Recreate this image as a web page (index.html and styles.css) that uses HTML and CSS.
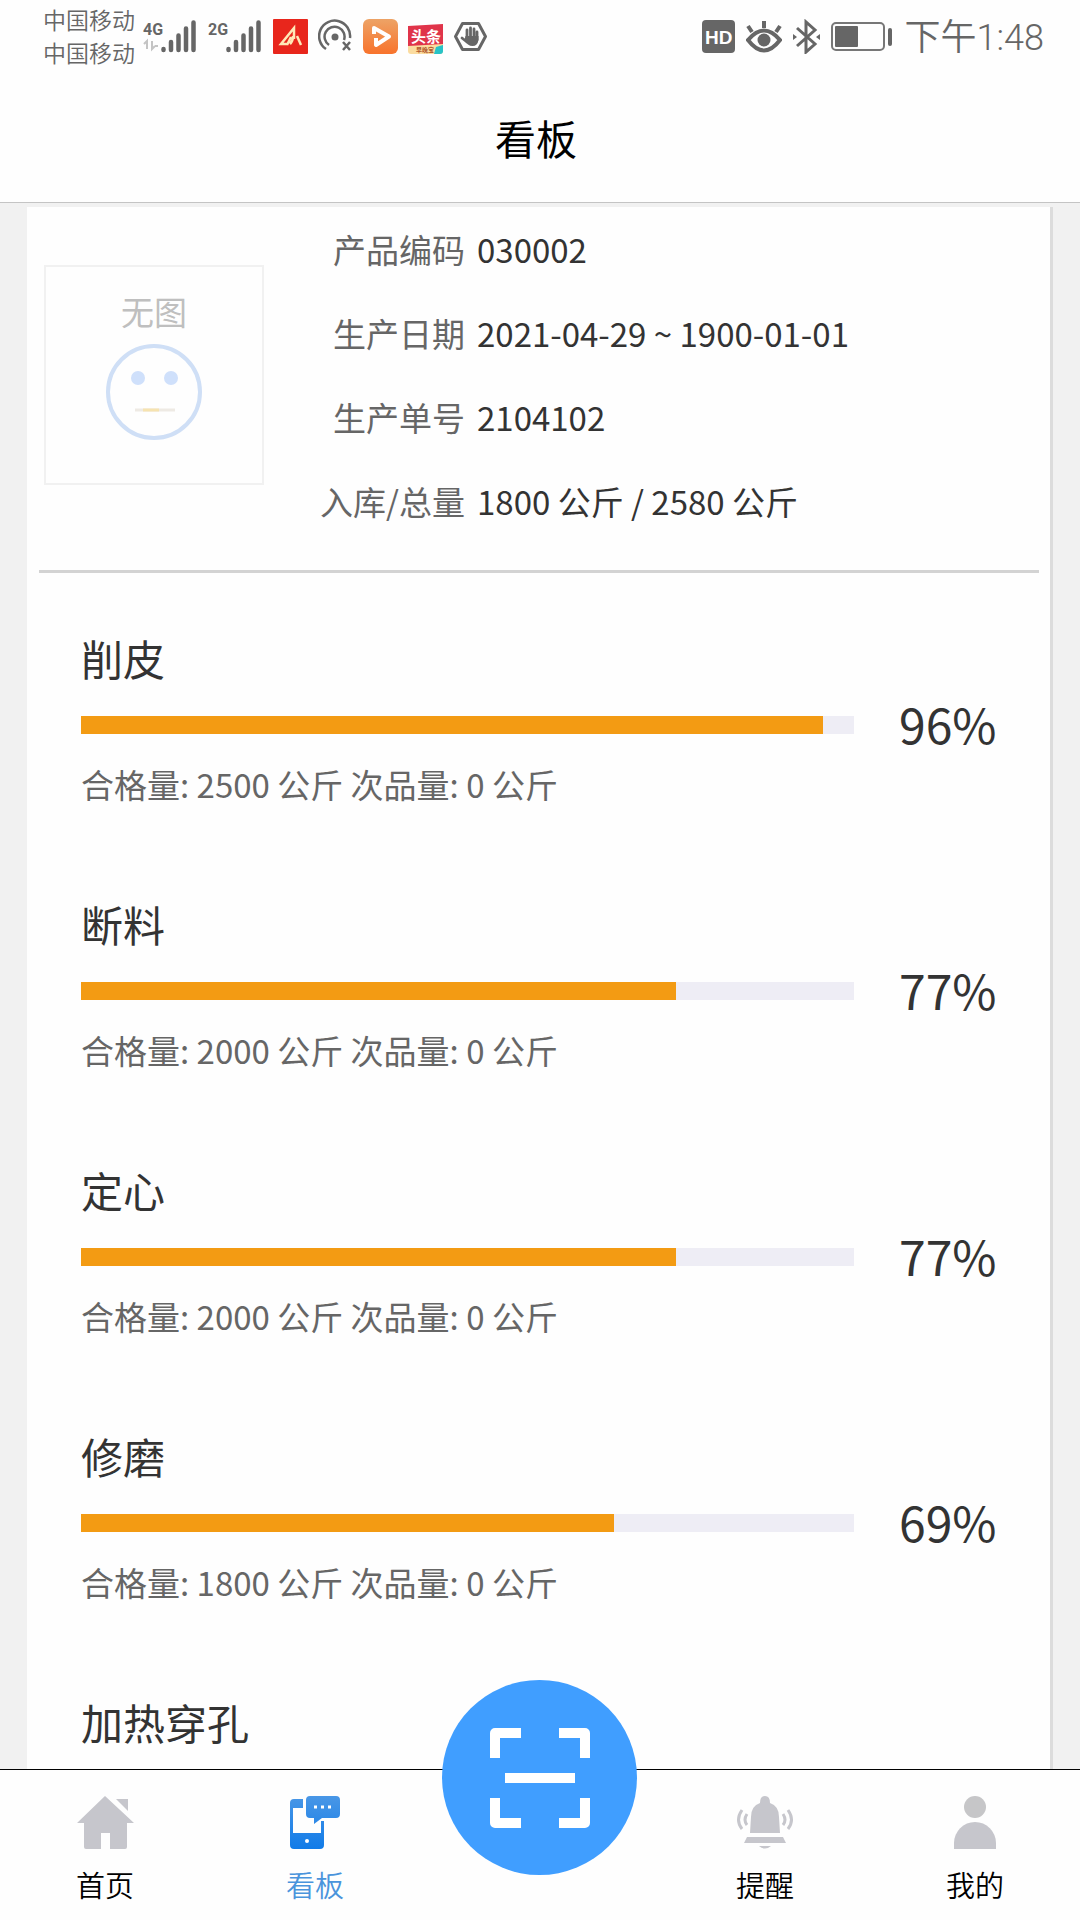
FILE: index.html
```html
<!DOCTYPE html>
<html lang="zh-CN">
<head>
  <meta charset="UTF-8" />
  <meta name="viewport" content="width=device-width, initial-scale=1.0" />
  <title>看板</title>
  <link rel="stylesheet" href="styles.css">
</head>
<body>
  <div class="statusbar">
    <div class="carriers">
      <span>中国移动</span>
      <span>中国移动</span>
    </div>
    <svg class="signal" width="54" height="36" viewBox="0 0 54 36">
      <text class="net" x="0" y="17">4G</text>
      <path d="M4 31V23L1 26M9 23v8l3-3M12 28h3" fill="none" stroke="#c4c4c4" stroke-width="2"/>
      <path d="M20.500 31v1M28 24v8M35.500 17.500v14.500M43 10.500v21.500M50.500 4.500v27.500" stroke="#666" stroke-width="4.500" stroke-linecap="round"/>
    </svg>
    <svg class="signal" width="54" height="36" viewBox="0 0 54 36">
      <text class="net" x="0" y="17">2G</text>
      <path d="M20.500 31v1M28 24v8M35.500 17.500v14.500M43 10.500v21.500M50.500 4.500v27.500" stroke="#666" stroke-width="4.500" stroke-linecap="round"/>
    </svg>
    <div class="notices">
      <svg width="35" height="35" viewBox="0 0 35 35">
        <rect width="35" height="35" rx="1" fill="#e8261c"/>
        <path d="M14 25H8L21 9v11M14 26l4-8M24 17l4 9M20 17q0 5-3 8" fill="none" stroke="#ffe9b8" stroke-width="2.500"/>
      </svg>
      <svg width="35" height="35" viewBox="0 0 35 35">
        <circle cx="17" cy="18" r="3.500" fill="#666"/>
        <path d="M11 26a10 10 0 1 1 15-5M8 30a15.500 15.500 0 1 1 24-11M25 23l7 8M32 23l-7 8" fill="none" stroke="#666" stroke-width="2.500"/>
      </svg>
      <svg width="35" height="35" viewBox="0 0 35 35">
        <defs>
          <linearGradient id="orange" x1="0" y1="0" x2="0" y2="1">
            <stop offset="0" stop-color="#eda366"/>
            <stop offset="1" stop-color="#f8732c"/>
          </linearGradient>
        </defs>
        <rect width="35" height="35" rx="6" fill="url(#orange)"/>
        <path d="M11 15V9l15 8.500L13 26v-7" fill="none" stroke="#fff" stroke-width="4" stroke-linejoin="round"/>
      </svg>
      <svg width="35" height="35" viewBox="0 0 35 35">
        <path d="M0 7l35-2v22H0z" fill="#e0344a"/>
        <path d="M0 27l35-2v7q0 3-3 3H3q-3 0-3-3z" fill="#fbdca0"/>
        <path d="M28 28l7-2v6q0 3-3 3h-6z" fill="#27c3c7"/>
        <text class="toutiao" x="3" y="23">头条</text>
        <text class="toutiao-sub" x="8" y="33">早晚宝</text>
      </svg>
      <svg width="35" height="35" viewBox="0 0 35 35">
        <path d="M9.500 4.500h16l7 13-7 13h-16l-7-13z" fill="none" stroke="#666" stroke-width="3" stroke-linejoin="round"/>
        <path d="M9 19l5 4M14 11v9M17.500 9v10M21 10v10M24 13v8" stroke="#666" stroke-width="2.800" stroke-linecap="round"/>
        <path d="M12.500 17h13v4q-1 6-6 6t-8-6z" fill="#666"/>
      </svg>
    </div>
    <div class="system">
      <svg width="33" height="35" viewBox="0 0 33 35">
        <rect y="1" width="33" height="33" rx="4" fill="#666"/>
        <text class="hd" x="3" y="25">HD</text>
      </svg>
      <svg width="36" height="35" viewBox="0 0 36 35">
        <path d="M2 21q16-19 32 0q-16 21-32 0z" fill="none" stroke="#666" stroke-width="4"/>
        <circle cx="18" cy="21" r="6.500" fill="#666"/>
        <path d="M18 2v7M2 7l4 6M34 7l-4 6" stroke="#666" stroke-width="4"/>
      </svg>
      <svg width="27" height="35" viewBox="0 0 27 35">
        <path d="M4 9l18 16-9 8V3l9 8L4 27" fill="none" stroke="#666" stroke-width="3"/>
        <path d="M0 15l4 3-4 3zM27 15l-4 3 4 3z" fill="#666"/>
      </svg>
      <svg width="62" height="35" viewBox="0 0 62 35">
        <rect x="1" y="4" width="52" height="27" rx="4" fill="none" stroke="#777" stroke-width="2"/>
        <rect x="4" y="7" width="23" height="21" rx="1" fill="#666"/>
        <rect x="57" y="9" width="4" height="18" rx="2" fill="#666"/>
      </svg>
    </div>
    <time class="clock">下午1:48</time>
  </div>

  <header class="header">
    <h1>看板</h1>
  </header>

  <main class="main">
    <div class="card">
      <div class="info">
        <div class="thumb">
          <span>无图</span>
          <svg width="98" height="98" viewBox="0 0 98 98">
            <circle cx="49" cy="49" r="46" fill="none" stroke="#cfdff6" stroke-width="4"/>
            <circle cx="33" cy="35" r="7" fill="#cfe0fb"/>
            <circle cx="66" cy="35" r="7" fill="#cfe0fb"/>
            <path d="M30 67h40" stroke="#eeeae4" stroke-width="3"/>
            <path d="M38 67h16" stroke="#f6e3b0" stroke-width="3"/>
          </svg>
        </div>
        <dl class="fields">
          <div><dt>产品编码</dt><dd>030002</dd></div>
          <div><dt>生产日期</dt><dd>2021-04-29 ~ 1900-01-01</dd></div>
          <div><dt>生产单号</dt><dd>2104102</dd></div>
          <div><dt>入库/总量</dt><dd>1800 公斤 / 2580 公斤</dd></div>
        </dl>
      </div>

      <div class="steps">
        <section class="step">
          <h2>削皮</h2>
          <div class="bar"><div class="fill" style="width: 96%"></div></div>
          <span class="percent">96%</span>
          <p>合格量: 2500 公斤 次品量: 0 公斤</p>
        </section>
        <section class="step">
          <h2>断料</h2>
          <div class="bar"><div class="fill" style="width: 77%"></div></div>
          <span class="percent">77%</span>
          <p>合格量: 2000 公斤 次品量: 0 公斤</p>
        </section>
        <section class="step">
          <h2>定心</h2>
          <div class="bar"><div class="fill" style="width: 77%"></div></div>
          <span class="percent">77%</span>
          <p>合格量: 2000 公斤 次品量: 0 公斤</p>
        </section>
        <section class="step">
          <h2>修磨</h2>
          <div class="bar"><div class="fill" style="width: 69%"></div></div>
          <span class="percent">69%</span>
          <p>合格量: 1800 公斤 次品量: 0 公斤</p>
        </section>
        <section class="step">
          <h2>加热穿孔</h2>
        </section>
      </div>
    </div>
  </main>

  <nav class="tabbar">
    <a class="tab" href="#home">
      <svg width="58" height="56" viewBox="0 0 58 56">
        <path d="M29 1L1 28h7v24q0 2 2 2h15V38h9v16h15q2 0 2-2V28h7z" fill="#c6c6cc"/>
        <path d="M40 4h12v12z" fill="#c6c6cc"/>
      </svg>
      <span>首页</span>
    </a>
    <a class="tab active" href="#board">
      <svg width="58" height="56" viewBox="0 0 58 56">
        <defs>
          <linearGradient id="blue" x1="0" y1="0" x2="0" y2="56" gradientUnits="userSpaceOnUse">
            <stop offset="0" stop-color="#4a97e6"/>
            <stop offset="1" stop-color="#0f7ae8"/>
          </linearGradient>
        </defs>
        <path d="M8 4h9v9H7v25h28V26h3v24q0 4-4 4H8q-4 0-4-4V8q0-4 4-4z" fill="url(#blue)"/>
        <path d="M24 1h26q4 0 4 4v14q0 4-4 4H36l-8 6v-6h-4q-4 0-4-4V5q0-4 4-4z" fill="url(#blue)"/>
        <circle cx="21" cy="46" r="2" fill="#fff"/>
        <path d="M28 12h3M35 12h3M42 12h3" stroke="#fff" stroke-width="3"/>
      </svg>
      <span>看板</span>
    </a>
    <button class="scan" type="button" aria-label="扫码">
      <svg width="100" height="100" viewBox="0 0 100 100">
        <path d="M5 30V5h26M69 5h26v25M5 70v25h26M69 95h26V70M15 50h70" fill="none" stroke="#fff" stroke-width="10" stroke-linejoin="round"/>
      </svg>
    </button>
    <a class="tab" href="#remind">
      <svg width="58" height="56" viewBox="0 0 58 56">
        <path d="M29 1q5 0 5 7q9 3 9 14l1 16H14l1-16q0-11 9-14q0-7 5-7z" fill="#c6c6cc"/>
        <path d="M11 42h36l3 6H8zM23 51h12q-6 5-12 0z" fill="#c6c6cc"/>
        <path d="M11 19q-4 6 0 11M6 15q-7 10 0 19M47 19q4 6 0 11M52 15q7 10 0 19" fill="none" stroke="#c6c6cc" stroke-width="3"/>
      </svg>
      <span>提醒</span>
    </a>
    <a class="tab" href="#mine">
      <svg width="58" height="56" viewBox="0 0 58 56">
        <circle cx="29" cy="12" r="11" fill="#c6c6c8"/>
        <path d="M8 54v-6a21 21 0 0 1 42 0v6z" fill="#c6c6cc"/>
      </svg>
      <span>我的</span>
    </a>
  </nav>
</body>
</html>
```
FILE: styles.css
```css
* {
  box-sizing: border-box;
}
body {
  margin: 0;
  height: 100vh;
  display: flex;
  flex-direction: column;
  font-family: "Noto Sans CJK SC", sans-serif;
  font-weight: 400;
  background: #fefefe;
  color: #333;
}
h1, h2, p, dl, dd {
  margin: 0;
  font-weight: inherit;
}

/* status bar */
.statusbar {
  height: 76px;
  padding: 0 36px 4px 43px;
  display: flex;
  align-items: center;
  color: #666;
}
.carriers {
  display: flex;
  flex-direction: column;
  font-size: 23px;
  font-weight: 350;
  line-height: 33px;
  margin-right: 8px;
}
.signal {
  margin-right: 11px;
  overflow: visible;
}
.net {
  font: bold 16px Roboto, sans-serif;
  fill: #666;
}
.notices {
  display: flex;
  gap: 10px;
}
.toutiao {
  font-size: 15px;
  font-weight: bold;
  fill: #fff;
}
.toutiao-sub {
  font-size: 6px;
  font-weight: bold;
  fill: #b0562a;
}
.system {
  display: flex;
  gap: 11px;
  margin-left: auto;
}
.hd {
  font: bold 19px "Liberation Sans", sans-serif;
  fill: #fff;
}
.clock {
  font-family: Roboto, "Noto Sans CJK SC", sans-serif;
  font-size: 36px;
  font-weight: 350;
  padding-bottom: 4px;
  margin-left: 12px;
}

.header {
  height: 127px;
  padding: 0 8px 4px 0;
  display: flex;
  align-items: center;
  justify-content: center;
  border-bottom: 1px solid #c4c4c4;
  color: #000;
}
.header h1 {
  font-size: 41px;
}

/* content */
.main {
  flex: 1;
  min-height: 0;
  overflow: hidden;
  padding: 4px 27px 0;
  background: #f1f1f1;
}
.card {
  min-height: 100%;
  background: #fefefe;
  border-right: 3px solid #dcdcdc;
}
.info {
  display: flex;
  align-items: center;
  margin: 0 11px 0 12px;
  padding: 0 0 27px 5px;
  border-bottom: 3px solid #d3d3d3;
}
.thumb {
  flex: none;
  width: 220px;
  height: 220px;
  padding-top: 20px;
  display: flex;
  flex-direction: column;
  align-items: center;
  gap: 8px;
  border: 2px solid #f1f1f1;
  font-size: 33px;
  line-height: 48px;
  color: #bfbfbf;
}
.fields {
  flex: 1;
  font-size: 33px;
  line-height: 84px;
}
.fields div {
  display: flex;
  gap: 12px;
}
.fields dt {
  flex: none;
  width: 201px;
  text-align: right;
  color: #666;
}
.steps {
  display: flex;
  flex-direction: column;
  gap: 86px;
  padding: 55px 53px 0 54px;
}
.step {
  display: grid;
  grid-template-columns: 1fr 98px;
  grid-template-rows: 62px 70px 48px;
  column-gap: 45px;
}
.step h2 {
  grid-column: 1 / -1;
  font-size: 42px;
  line-height: 60px;
}
.step p {
  grid-column: 1 / -1;
  font-size: 33px;
  line-height: 48px;
  color: #666;
}
.bar {
  align-self: center;
  height: 18px;
  background: #eeedf5;
}
.fill {
  height: 100%;
  background: #f39b13;
}
.percent {
  font-size: 48px;
  line-height: 66px;
}

/* bottom tabs */
.tabbar {
  height: 151px;
  display: flex;
  align-items: flex-start;
  border-top: 1px solid #000;
}
.tab {
  flex: 1;
  padding-top: 25px;
  display: flex;
  flex-direction: column;
  align-items: center;
  gap: 11px;
  font-size: 29px;
  font-weight: 350;
  line-height: 44px;
  color: #000;
  text-decoration: none;
}
.tab.active {
  color: #4a94dc;
}
.scan {
  width: 195px;
  height: 195px;
  margin: -90px 23px 0 22px;
  padding: 1px 0 0 1px;
  display: flex;
  align-items: center;
  justify-content: center;
  border: none;
  border-radius: 50%;
  background: #409eff;
  cursor: pointer;
  z-index: 1;
}
```
